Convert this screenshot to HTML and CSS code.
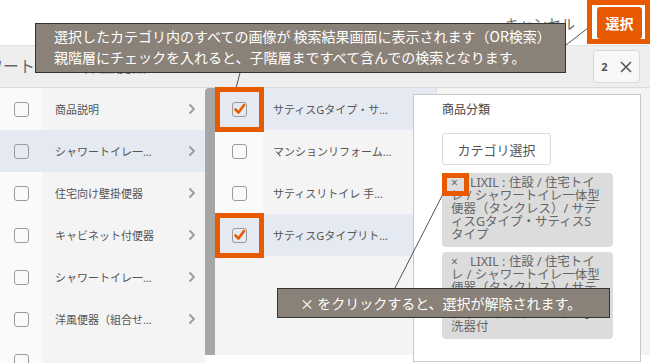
FILE: index.html
```html
<!DOCTYPE html>
<html lang="ja">
<head>
  <meta charset="UTF-8" />
  <meta name="viewport" content="width=device-width, initial-scale=1.0"/>
  <link rel="stylesheet" href="styles.css">
</head>
<body>

  <!-- Top bar -->
  <div class="topbar">
    <span class="cancel">キャンセル</span>
    <button class="btn-select">選択</button>
  </div>

  <!-- Breadcrumb header -->
  <div class="header">
    <div class="crumb">ワートイレ一体型便器</div>
    <button class="btn-count"><b>2</b><svg width="12" height="12" viewBox="0 0 12 12"><path d="M1 1 L11 11 M11 1 L1 11"/></svg></button>
  </div>

  <!-- Category lists -->
  <div class="lists">
    <ul class="col col-left">
      <li class="row"><span class="cb-cell"><span class="cb"></span></span><span class="label">商品説明</span><svg class="chev" width="8" height="12" viewBox="0 0 8 12"><polyline points="1.5,1.5 6,6 1.5,10.5"/></svg></li>
      <li class="row active"><span class="cb-cell"><span class="cb"></span></span><span class="label">シャワートイレ一体型便器（タンクレス）</span><svg class="chev" width="8" height="12" viewBox="0 0 8 12"><polyline points="1.5,1.5 6,6 1.5,10.5"/></svg></li>
      <li class="row"><span class="cb-cell"><span class="cb"></span></span><span class="label">住宅向け壁掛便器</span><svg class="chev" width="8" height="12" viewBox="0 0 8 12"><polyline points="1.5,1.5 6,6 1.5,10.5"/></svg></li>
      <li class="row"><span class="cb-cell"><span class="cb"></span></span><span class="label">キャビネット付便器</span><svg class="chev" width="8" height="12" viewBox="0 0 8 12"><polyline points="1.5,1.5 6,6 1.5,10.5"/></svg></li>
      <li class="row"><span class="cb-cell"><span class="cb"></span></span><span class="label">シャワートイレ一体型便器（タンク付）</span><svg class="chev" width="8" height="12" viewBox="0 0 8 12"><polyline points="1.5,1.5 6,6 1.5,10.5"/></svg></li>
      <li class="row"><span class="cb-cell"><span class="cb"></span></span><span class="label">洋風便器（組合せ便器）</span><svg class="chev" width="8" height="12" viewBox="0 0 8 12"><polyline points="1.5,1.5 6,6 1.5,10.5"/></svg></li>
      <li class="row"><span class="cb-cell"><span class="cb"></span></span><span class="label"></span></li>
    </ul>

    <div class="scrollbar"></div>

    <ul class="col col-mid">
      <li class="row active"><span class="cb-cell"><span class="cb checked"><svg width="13" height="13" viewBox="0 0 13 13"><polyline points="2.5,6.5 5.5,9.5 11,2"/></svg></span></span><span class="label">サティスGタイプ・サティスSタイプ</span></li>
      <li class="row"><span class="cb-cell"><span class="cb"></span></span><span class="label">マンションリフォーム用便器</span></li>
      <li class="row"><span class="cb-cell"><span class="cb"></span></span><span class="label">サティスリトイレ 手洗器付</span></li>
      <li class="row active"><span class="cb-cell"><span class="cb checked"><svg width="13" height="13" viewBox="0 0 13 13"><polyline points="2.5,6.5 5.5,9.5 11,2"/></svg></span></span><span class="label">サティスGタイプリトイレ手洗器付</span></li>
    </ul>

    <div class="col-rest"></div>
  </div>

  <!-- Selected categories popover -->
  <div class="panel">
    <div class="panel-title">商品分類</div>
    <button class="btn-cat">カテゴリ選択</button>
    <div class="chip"><span class="x">×</span>LIXIL : 住設 / 住宅トイレ / シャワートイレ一体型便器（タンクレス）/ サティスGタイプ・サティスSタイプ</div>
    <div class="chip"><span class="x">×</span>LIXIL : 住設 / 住宅トイレ / シャワートイレ一体型便器（タンクレス）/ サティスGタイプリトイレ・サティスSタイプリトイレ手洗器付</div>
  </div>

  <!-- Annotations -->
  <svg class="leaders" width="650" height="363">
    <line x1="240" y1="73" x2="236" y2="88"/>
    <line x1="566" y1="45" x2="588" y2="28"/>
    <line x1="395" y1="288" x2="444" y2="192"/>
  </svg>
  <div class="mark mark-select"></div>
  <div class="mark mark-cb1"></div>
  <div class="mark mark-cb2"></div>
  <div class="mark mark-x"></div>

  <div class="tip tip-top">選択したカテゴリ内のすべての画像が 検索結果画面に表示されます（OR検索）<br>親階層にチェックを入れると、子階層まですべて含んでの検索となります。</div>
  <div class="tip tip-bottom">× をクリックすると、選択が解除されます。</div>

</body>
</html>
```

FILE: styles.css
```css
* {
  margin: 0;
  padding: 0;
  box-sizing: border-box;
}

html, body {
  width: 650px;
  height: 363px;
  overflow: hidden;
}

body {
  position: relative;
  background: #fff;
  font-family: "Noto Sans", "Noto Sans CJK JP", sans-serif;
  color: #555;
}

button {
  font-family: inherit;
  cursor: pointer;
}

/* top bar */
.topbar {
  height: 45px;
  display: flex;
  align-items: center;
  justify-content: flex-end;
  gap: 22px;
  padding-right: 8px;
}

.cancel {
  font-size: 14px;
  color: #666;
}

.btn-select {
  width: 45px;
  height: 32px;
  border: none;
  border-radius: 3px;
  background: #e85a00;
  color: #fff;
  font-size: 14px;
  font-weight: bold;
}

/* header */
.header {
  height: 43px;
  display: flex;
  align-items: center;
  justify-content: space-between;
  background: #eeeeee;
  border-top: 1px solid #e2e2e2;
  border-bottom: 1px solid #dcdcdc;
  padding-right: 10px;
}

.crumb {
  margin: 0 0 4px -13px;
  font-size: 16px;
  color: #666;
  white-space: nowrap;
}

.btn-count {
  width: 47px;
  height: 33px;
  display: flex;
  align-items: center;
  justify-content: center;
  gap: 12px;
  background: #f8f8f8;
  border: 1px solid #d8d8d8;
  border-radius: 4px;
  color: #555;
}

.btn-count b {
  font-size: 11px;
}

.btn-count path {
  stroke: #555;
  stroke-width: 1.6;
}

/* lists */
.lists {
  display: flex;
  height: 275px;
}

.col {
  list-style: none;
  overflow: hidden;
  background: #f4f4f4;
}

.col-left {
  width: 205px;
  height: 275px;
}

.scrollbar {
  width: 10px;
  height: 267px;
  background: #a6a6a6;
  border-radius: 4px 0 0 0;
}

.col-mid {
  width: 222px;
  height: 267px;
  border-right: 1px solid #dedede;
}

.col-rest {
  flex: 1;
  height: 267px;
  background: #f4f4f4;
}

.row {
  height: 42px;
  display: flex;
  align-items: center;
  font-size: 11px;
  color: #555;
}

.row.active,
.row.active .cb-cell {
  background: #e5e9f1;
}

.cb-cell {
  width: 42px;
  height: 100%;
  display: flex;
  align-items: center;
  justify-content: center;
  background: #fafafa;
}

.col-mid .cb-cell {
  width: 48px;
}

.cb {
  width: 15px;
  height: 15px;
  border: 1px solid #9a9a9a;
  border-radius: 3px;
  display: flex;
  align-items: center;
  justify-content: center;
}

.cb polyline {
  fill: none;
  stroke: #e85a00;
  stroke-width: 2.6;
  stroke-linecap: round;
  stroke-linejoin: round;
}

.label {
  white-space: nowrap;
  overflow: hidden;
  text-overflow: ellipsis;
}

.col-left .label {
  width: 104px;
  margin-left: 13px;
}

.col-mid .label {
  width: 120px;
  margin-left: 10px;
}

.chev {
  margin-left: 29px;
}

.chev polyline {
  fill: none;
  stroke: #9a9a9a;
  stroke-width: 1.8;
}

/* popover panel */
.panel {
  position: absolute;
  left: 413px;
  top: 94px;
  width: 228px;
  height: 268px;
  background: #fff;
  border: 1px solid #c8c8c8;
  padding: 6px 0 0 28px;
}

.panel-title {
  font-size: 12px;
  color: #444;
  line-height: 18px;
}

.btn-cat {
  display: block;
  margin-top: 14px;
  width: 109px;
  height: 32px;
  background: #fff;
  border: 1px solid #dadada;
  border-radius: 3px;
  font-size: 13px;
  color: #555;
}

.chip {
  width: 171px;
  margin-top: 8px;
  padding: 3px 11px 6px 9px;
  background: #dcdcdc;
  border-radius: 4px;
  font-size: 12.5px;
  line-height: 13px;
  color: #666;
  line-break: loose;
}

.chip + .chip {
  margin-top: 5px;
}

.chip .x {
  font-size: 12px;
  margin-right: 12px;
}

/* annotations */
.leaders {
  position: absolute;
  left: 0;
  top: 0;
  pointer-events: none;
}

.leaders line {
  stroke: #555;
  stroke-width: 1;
}

.mark {
  position: absolute;
  border: 5px solid #e85a00;
}

.mark-select {
  left: 587px;
  top: 0;
  width: 63px;
  height: 44px;
}

.mark-cb1 {
  left: 215px;
  top: 87px;
  width: 49px;
  height: 45px;
}

.mark-cb2 {
  left: 215px;
  top: 213px;
  width: 49px;
  height: 45px;
}

.mark-x {
  left: 442px;
  top: 173px;
  width: 27px;
  height: 23px;
}

.tip {
  position: absolute;
  background: #8a8178;
  border: 1px solid #333;
  color: #fff;
  font-family: "Noto Sans CJK JP", sans-serif;
  font-size: 14px;
  white-space: nowrap;
}

.tip-top {
  left: 35px;
  top: 23px;
  width: 531px;
  height: 50px;
  padding: 2px 0 0 18px;
  line-height: 21px;
}

.tip-bottom {
  left: 277px;
  top: 288px;
  width: 333px;
  height: 30px;
  padding-left: 22px;
  line-height: 28px;
}
```
